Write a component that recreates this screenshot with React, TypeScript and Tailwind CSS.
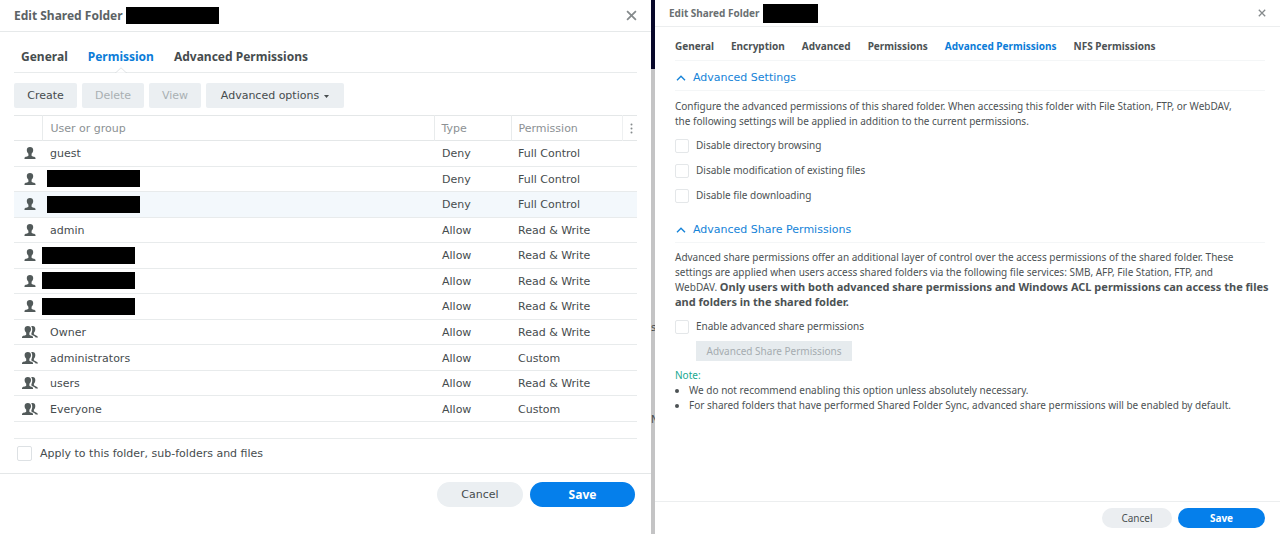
import React, { useState } from "react";

interface PermissionRow {
  name?: string;
  shift?: boolean;
  group?: boolean;
  active?: boolean;
  type: string;
  permission: string;
}

const rows: PermissionRow[] = [
  { name: "guest", type: "Deny", permission: "Full Control" },
  { type: "Deny", permission: "Full Control" },
  { type: "Deny", permission: "Full Control", active: true },
  { name: "admin", type: "Allow", permission: "Read & Write" },
  { shift: true, type: "Allow", permission: "Read & Write" },
  { shift: true, type: "Allow", permission: "Read & Write" },
  { shift: true, type: "Allow", permission: "Read & Write" },
  { name: "Owner", group: true, type: "Allow", permission: "Read & Write" },
  { name: "administrators", group: true, type: "Allow", permission: "Custom" },
  { name: "users", group: true, type: "Allow", permission: "Read & Write" },
  { name: "Everyone", group: true, type: "Allow", permission: "Custom" },
];

const folderTabs = ["General", "Encryption", "Advanced", "Permissions", "Advanced Permissions", "NFS Permissions"];

const noto = "font-['Noto_Sans',sans-serif]";

function UserIcon() {
  return (
    <svg width="12" height="12" viewBox="0 0 12 12" fill="#525a5a" className="ml-[10px] block">
      <path d="M6 0C4 0 2.800 1 2.800 3c0 1.600.8 2.900 1.600 3.700v2C4 9.500.6 9.500.5 11v1h11v-1c-.1-1.500-3.500-1.500-3.900-2.300v-2C8.400 5.900 9.200 4.600 9.200 3c0-2-1.200-3-3.200-3z" />
    </svg>
  );
}

function GroupIcon() {
  return (
    <svg width="16" height="12" viewBox="0 0 16 12" fill="#525a5a" className="ml-2 block">
      <path d="M5.800 0C3.800 0 2.600 1 2.600 3c0 1.600.8 2.900 1.600 3.700v2C3.800 9.500.2 9.500 0 11v1h11v-1c-.1-1.500-3.200-1.500-3.600-2.300v-2C8.200 5.900 9 4.600 9 3c0-2-1.200-3-3.200-3z" />
      <path d="M9.200.4c.3-.3.800-.4 1.300-.4 1.900 0 2.800 1 2.800 3 0 1.600-.6 2.900-1.400 3.700v1.500c.4.800 3.900 1.300 4.100 3.300h-2.300c-.8-1.900-3.200-2-4.300-3.100V7.200C10 6.200 10.300 4.600 10.200 3c0-1.100-.4-2-1-2.600z" />
    </svg>
  );
}

function CloseIcon({ size }: { size: number }) {
  return (
    <svg width={size} height={size} viewBox="0 0 10 10" fill="none" stroke="#858a8c" strokeWidth="1.6">
      <path d="M1 1l8 8M9 1L1 9" />
    </svg>
  );
}

function Mask() {
  return <span className="block h-[17px] w-[93px] bg-black" />;
}

function PermissionDialog() {
  const plain = "h-[25px] rounded-[2px] bg-[#ebeff2] pt-px";
  const [apply, setApply] = useState(false);

  return (
    <section className="min-w-0 text-[11px] leading-[16px] text-[#464c4e]">
      <header className="flex h-8 items-center border-b border-[#e6e9ea] px-[14px]">
        <h2 className={`${noto} text-[12px] font-bold text-[#5c6365]`}>Edit Shared Folder</h2>
        <span className="ml-[3px] h-[17px] w-[93px] bg-black" />
        <button aria-label="Close" className="ml-auto">
          <CloseIcon size={11} />
        </button>
      </header>

      <div className="px-[14px]">
        <nav className={`${noto} flex h-[41px] gap-5 border-b border-[#e8ebec] pt-[9px] pl-[7px] text-[12px] font-bold`}>
          <button>General</button>
          <button className="relative text-[#0b7cd8]">
            Permission
            <svg width="12" height="6" viewBox="0 0 12 6" fill="#fff" stroke="#dfe3e5" className="absolute -bottom-px left-1/2 -translate-x-1/2">
              <path d="M0 5.500h1L6 .8l5 4.700h1" />
            </svg>
          </button>
          <button>Advanced Permissions</button>
        </nav>

        <div className="flex gap-[5px] pt-[10px] pb-[7px]">
          <button className={`${plain} w-[63px]`}>Create</button>
          <button disabled className={`${plain} w-[62px] text-[#a9afb3]`}>Delete</button>
          <button disabled className={`${plain} w-[52px] text-[#a9afb3]`}>View</button>
          <button className={`${plain} flex w-[138px] items-center justify-center gap-[5px]`}>
            Advanced options
            <svg width="5" height="3" viewBox="0 0 5 3" fill="#464c4e">
              <path d="M0 0h5L2.500 3z" />
            </svg>
          </button>
        </div>

        <table className="h-[307px] w-full table-fixed border-t border-[#e4e7e8] text-left">
          <thead>
            <tr className="h-[25px] border-b border-[#e4e7e8] text-[#8c9194]">
              <th className="w-7 border-r border-[#e8ebec]" />
              <th className="border-r border-[#e8ebec] pt-[2px] pl-2 font-normal">User or group</th>
              <th className="w-[77px] border-r border-[#e8ebec] pt-[2px] pl-[7px] font-normal">Type</th>
              <th className="w-[111px] border-r border-[#eef0f1] pt-[2px] pl-[7px] font-normal">Permission</th>
              <th className="w-[15px] pl-1">
                <svg width="3" height="11" viewBox="0 0 3 11" fill="#858a8c" className="mx-auto">
                  <circle cx="1.500" cy="1.500" r="1" />
                  <circle cx="1.500" cy="5.500" r="1" />
                  <circle cx="1.500" cy="9.500" r="1" />
                </svg>
              </th>
            </tr>
          </thead>
          <tbody>
            {rows.map((row, i) => (
              <tr key={i} className={`h-[25px] border-b border-[#e8ebec] ${row.active ? "bg-[#f3f8fc]" : ""}`}>
                <td>{row.group ? <GroupIcon /> : <UserIcon />}</td>
                <td className={row.name ? "pt-[2px] pl-2" : row.shift ? "pl-0" : "pl-[5px]"}>{row.name ?? <Mask />}</td>
                <td className="pt-[2px] pl-2">{row.type}</td>
                <td className="pt-[2px] pl-[7px]" colSpan={2}>{row.permission}</td>
              </tr>
            ))}
          </tbody>
        </table>

        <label className="mt-4 flex h-[35px] items-center gap-2 border-t border-[#e8ebec] pb-[5px] pl-[3px]">
          <input
            type="checkbox"
            checked={apply}
            onChange={(e) => setApply(e.target.checked)}
            className="size-[15px] appearance-none rounded-[2px] border border-[#dde1e4] checked:bg-[#057feb]"
          />
          Apply to this folder, sub-folders and files
        </label>
      </div>

      <footer className="flex justify-end gap-[7px] border-t border-[#e4e7e8] pt-2 pr-4">
        <button className="h-[25px] w-[86px] rounded-full bg-[#ebeff2]">Cancel</button>
        <button className={`${noto} h-[25px] w-[105px] rounded-full bg-[#057feb] text-[12px] font-bold text-white`}>Save</button>
      </footer>
    </section>
  );
}

function Option({ label }: { label: string }) {
  return (
    <label className="flex h-[25px] items-center gap-[7px]">
      <input type="checkbox" className="size-[14px] appearance-none rounded-[2px] border border-[#e4e7e9] checked:bg-[#057feb]" />
      {label}
    </label>
  );
}

function SectionTitle({ children }: { children: React.ReactNode }) {
  return (
    <h3 className="border-b border-[#f4f6f7] pb-1 font-['DejaVu_Sans',sans-serif] text-[11px] leading-[16px] text-[#1583d8]">
      <button className="flex items-center gap-[7px] pl-px">
        <svg width="10" height="6" viewBox="0 0 10 6" fill="none" stroke="#1583d8" strokeWidth="1.4">
          <path d="M1 5.200L5 1.200l4 4" />
        </svg>
        {children}
      </button>
    </h3>
  );
}

function FolderDialog() {
  return (
    <section className={`${noto} flex min-w-0 flex-col text-[10px] leading-[15px] text-[#4c5254]`}>
      <header className="flex h-[27px] items-center border-b border-[#eceeef] px-[14px]">
        <h2 className="font-bold text-[#6a7072]">Edit Shared Folder</h2>
        <span className="ml-[3px] h-[19px] w-[55px] bg-black" />
        <button aria-label="Close" className="ml-auto">
          <CloseIcon size={8} />
        </button>
      </header>

      <div className="grow pr-[15px] pl-5">
        <nav className="flex h-[34px] gap-[17px] border-b border-[#f4f6f7] pt-[5px] font-bold whitespace-nowrap">
          {folderTabs.map((tab) => (
            <button key={tab} className={tab === "Advanced Permissions" ? "text-[#0b7cd8]" : ""}>
              {tab}
            </button>
          ))}
        </nav>

        <div className="pt-[9px]">
          <SectionTitle>Advanced Settings</SectionTitle>
          <p className="pt-2 pb-1">
            Configure the advanced permissions of this shared folder. When accessing this folder with File Station, FTP, or WebDAV,
            <br />
            the following settings will be applied in addition to the current permissions.
          </p>
          <Option label="Disable directory browsing" />
          <Option label="Disable modification of existing files" />
          <Option label="Disable file downloading" />
        </div>

        <div className="pt-[14px]">
          <SectionTitle>Advanced Share Permissions</SectionTitle>
          <p className="pt-[7px] pb-1 whitespace-nowrap">
            Advanced share permissions offer an additional layer of control over the access permissions of the shared folder. These
            <br />
            settings are applied when users access shared folders via the following file services: SMB, AFP, File Station, FTP, and
            <br />
            WebDAV.{" "}
            <b className="text-[11px] leading-none">Only users with both advanced share permissions and Windows ACL permissions can access the files</b>
            <br />
            <b className="text-[11px] leading-none">and folders in the shared folder.</b>
          </p>
          <Option label="Enable advanced share permissions" />
          <button disabled className="mt-[2px] ml-[21px] block h-5 w-[156px] bg-[#e6ebee] text-[#a5acb0]">
            Advanced Share Permissions
          </button>
          <p className="pt-[7px] text-[#18a890]">Note:</p>
          <ul className="list-disc pl-[14px]">
            <li>We do not recommend enabling this option unless absolutely necessary.</li>
            <li>For shared folders that have performed Shared Folder Sync, advanced share permissions will be enabled by default.</li>
          </ul>
        </div>
      </div>

      <footer className="flex h-[35px] justify-end gap-[6px] border-t border-[#eceeef] pt-[6px] pr-[15px]">
        <button className="h-5 w-[70px] rounded-full bg-[#ebeef1]">Cancel</button>
        <button className="h-5 w-[87px] rounded-full bg-[#057feb] font-bold text-white">Save</button>
      </footer>
    </section>
  );
}

export default function App() {
  return (
    <main className="grid min-h-screen grid-cols-[651fr_4px_625fr] bg-white font-['DejaVu_Sans',Verdana,sans-serif]">
      <PermissionDialog />
      <div className="mb-[2px] overflow-hidden bg-[#c4c4c5] text-[10px] leading-[15px] text-[#464c4e]">
        <div className="h-[69px] bg-[#08082a]" />
        <div className="pt-[251px]">s:</div>
        <div className="pt-[77px]">N</div>
      </div>
      <FolderDialog />
    </main>
  );
}
